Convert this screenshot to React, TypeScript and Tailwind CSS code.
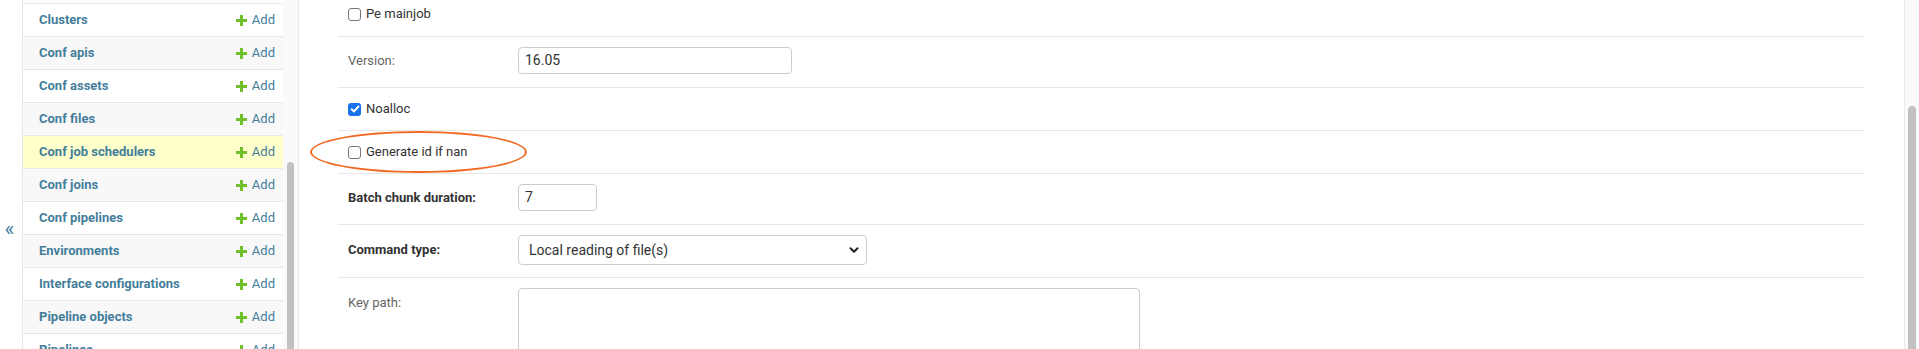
import React from "react";

const rows: { name: string; bg: string }[] = [
  { name: "Clusters", bg: "bg-white" },
  { name: "Conf apis", bg: "bg-[#f8f8f8]" },
  { name: "Conf assets", bg: "bg-white" },
  { name: "Conf files", bg: "bg-[#f8f8f8]" },
  { name: "Conf job schedulers", bg: "bg-[#ffffcc]" },
  { name: "Conf joins", bg: "bg-[#f8f8f8]" },
  { name: "Conf pipelines", bg: "bg-white" },
  { name: "Environments", bg: "bg-[#f8f8f8]" },
  { name: "Interface configurations", bg: "bg-white" },
  { name: "Pipeline objects", bg: "bg-[#f8f8f8]" },
  { name: "Pipelines", bg: "bg-white" },
];

function Plus() {
  return (
    <svg width="11" height="11" viewBox="0 0 10 10" className="shrink-0">
      <path d="M3.6 0h2.8v3.6H10v2.8H6.4V10H3.6V6.4H0V3.6h3.6z" fill="#70bf2b" />
    </svg>
  );
}

function Checkbox({ checked }: { checked?: boolean }) {
  if (checked) {
    return (
      <span className="w-[13px] h-[13px] rounded-[3px] bg-[#1a73e8] flex items-center justify-center shrink-0">
        <svg width="10" height="10" viewBox="0 0 10 10">
          <path d="M1.6 5.2l2.3 2.3 4.6-5" stroke="white" strokeWidth="1.9" fill="none" strokeLinecap="round" strokeLinejoin="round" />
        </svg>
      </span>
    );
  }
  return <span className="w-[13px] h-[13px] rounded-[3px] border border-[#767676] bg-white shrink-0" />;
}

export default function App() {
  return (
    <div
      className="relative w-[1919px] h-[349px] overflow-hidden bg-white flex text-[13px] text-[#333]"
      style={{ fontFamily: "Roboto, 'Liberation Sans', sans-serif" }}
    >
      {/* toggle */}
      <div className="w-[23px] shrink-0 border-r border-[#e8e8e8] flex items-start justify-center pt-[219px] text-[#447e9b] text-[21px] leading-none">
        <span className="-ml-[3px]">«</span>
      </div>

      {/* sidebar */}
      <div className="w-[276px] shrink-0 border-r border-[#e8e8e8] flex">
        <div className="w-[260px] shrink-0 flex flex-col">
          <div className="h-[4px] shrink-0 border-b border-[#e8e8e8] bg-white" />
          {rows.map((r) => (
            <div
              key={r.name}
              className={`h-[33px] shrink-0 border-b border-[#e8e8e8] flex items-center justify-between pl-[16px] pr-[8px] ${r.bg}`}
            >
              <span className="font-bold text-[#447e9b]">{r.name}</span>
              <span className="flex items-center gap-[5px] text-[#447e9b]">
                <Plus />
                <span>Add</span>
              </span>
            </div>
          ))}
        </div>
        <div className="w-[15px] shrink-0 bg-[#fafafa] flex justify-center pt-[162px]">
          <div className="w-[7px] h-[300px] rounded-full bg-[#c1c1c1]" />
        </div>
      </div>

      {/* main */}
      <div className="flex-1 pl-[39px] pr-[40px]">
        <div className="flex flex-col">
          {/* Pe mainjob */}
          <div className="h-[45px] -mt-[8px] border-b border-[#e8e8e8] flex items-center pl-[10px] gap-[5px]">
            <Checkbox />
            <span>Pe mainjob</span>
          </div>
          {/* Version */}
          <div className="h-[51px] border-b border-[#e8e8e8] flex items-start pt-[10px] pl-[10px]">
            <span className="w-[170px] shrink-0 text-[#666] leading-[27px]">Version:</span>
            <div className="w-[274px] h-[27px] border border-[#ccc] rounded-[4px] px-[6px] flex items-center text-[14px] text-[#333]">
              16.05
            </div>
          </div>
          {/* Noalloc */}
          <div className="h-[43px] border-b border-[#e8e8e8] flex items-center pl-[10px] gap-[5px]">
            <Checkbox checked />
            <span>Noalloc</span>
          </div>
          {/* Generate id */}
          <div className="h-[43px] border-b border-[#e8e8e8] flex items-center pl-[10px] gap-[5px]">
            <Checkbox />
            <span>Generate id if nan</span>
          </div>
          {/* Batch chunk */}
          <div className="h-[51px] border-b border-[#e8e8e8] flex items-start pt-[10px] pl-[10px]">
            <span className="w-[170px] shrink-0 font-bold text-[#333] leading-[27px]">Batch chunk duration:</span>
            <div className="w-[79px] h-[27px] border border-[#ccc] rounded-[4px] px-[6px] flex items-center text-[14px] text-[#333]">
              7
            </div>
          </div>
          {/* Command type */}
          <div className="h-[53px] border-b border-[#e8e8e8] flex items-start pt-[10px] pl-[10px]">
            <span className="w-[170px] shrink-0 font-bold text-[#333] leading-[30px]">Command type:</span>
            <div className="w-[349px] h-[30px] border border-[#ccc] rounded-[4px] pl-[10px] pr-[6px] flex items-center justify-between text-[14px] text-[#333]">
              <span>Local reading of file(s)</span>
              <svg width="12" height="12" viewBox="0 0 12 12">
                <path d="M2.5 4.2L6 7.7l3.5-3.5" stroke="#222" strokeWidth="2" fill="none" strokeLinecap="round" strokeLinejoin="round" />
              </svg>
            </div>
          </div>
          {/* Key path */}
          <div className="h-[120px] flex items-start pt-[10px] pl-[10px]">
            <span className="w-[170px] shrink-0 text-[#666] leading-[30px]">Key path:</span>
            <div className="w-[622px] h-[100px] border border-[#ccc] rounded-[4px]" />
          </div>
        </div>
      </div>

      {/* main scrollbar */}
      <div className="w-[15px] shrink-0 border-l border-[#e8e8e8] bg-[#fafafa] flex justify-center pt-[106px]">
        <div className="w-[8px] h-[300px] rounded-full bg-[#c1c1c1]" />
      </div>

      {/* annotation ellipse */}
      <div className="absolute left-[310px] top-[131px] w-[217px] h-[42px] rounded-[50%] border-2 border-[#f26a21]" />
    </div>
  );
}
